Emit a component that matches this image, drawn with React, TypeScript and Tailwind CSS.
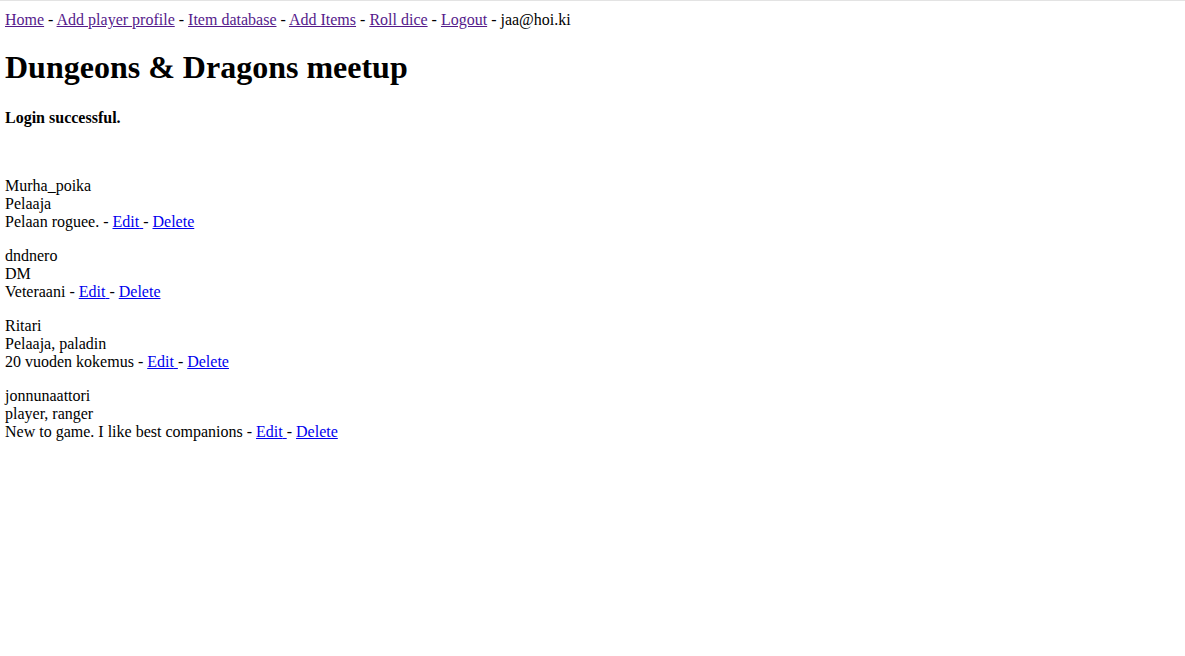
import React from "react";

const navLinks = ["Home", "Add player profile", "Item database", "Add Items", "Roll dice", "Logout"];

const players = [
  { name: "Murha_poika", role: "Pelaaja", desc: "Pelaan roguee." },
  { name: "dndnero", role: "DM", desc: "Veteraani" },
  { name: "Ritari", role: "Pelaaja, paladin", desc: "20 vuoden kokemus" },
  { name: "jonnunaattori", role: "player, ranger", desc: "New to game. I like best companions" },
];

export default function App() {
  return (
    <div
      className="min-h-[656px] bg-white border-t border-[#e3e3e3] pl-[5px] pt-[10px] text-black text-[16px] leading-[18px]"
      style={{ fontFamily: '"Liberation Serif", "Times New Roman", serif' }}
    >
      <div>
        {navLinks.map((l) => (
          <React.Fragment key={l}>
            <a href="#" className="text-[#551a8b] underline">
              {l}
            </a>
            {" - "}
          </React.Fragment>
        ))}
        jaa@hoi.ki
      </div>
      <h1 className="mt-[20px] text-[32px] leading-[37px] font-bold">Dungeons &amp; Dragons meetup</h1>
      <h4 className="mt-[23px] font-bold">Login successful.</h4>
      <div className="mt-[50px] flex flex-col gap-[16px]">
        {players.map((p) => (
          <div key={p.name}>
            <div>{p.name}</div>
            <div>{p.role}</div>
            <div>
              {p.desc} -{" "}
              <a href="#" className="text-[#0000ee] underline">
                Edit{" "}
              </a>
              -{" "}
              <a href="#" className="text-[#0000ee] underline">
                Delete
              </a>
            </div>
          </div>
        ))}
      </div>
    </div>
  );
}
